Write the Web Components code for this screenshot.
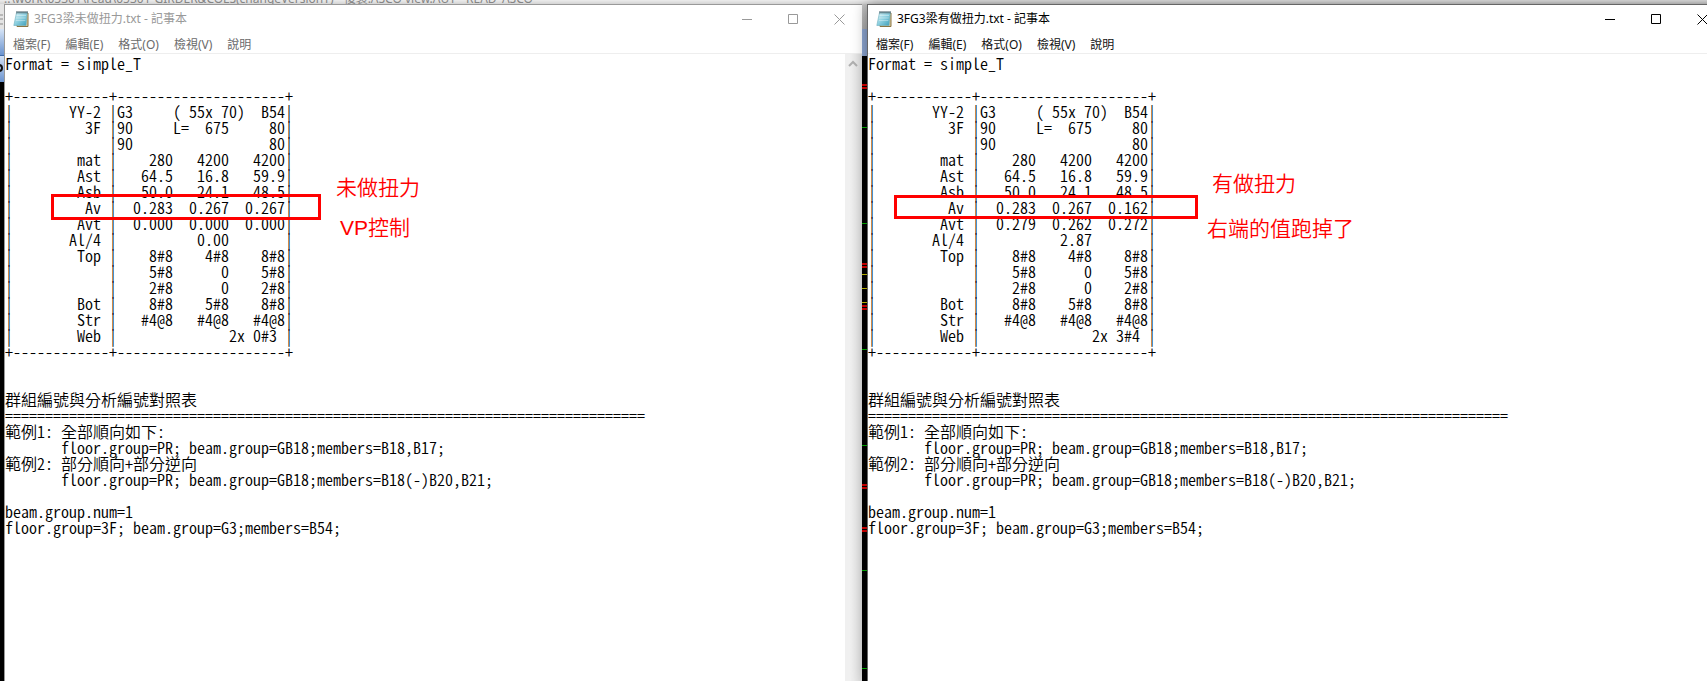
<!DOCTYPE html>
<html lang="zh-Hant">
<head>
<meta charset="utf-8">
<title>記事本</title>
<style>
html,body{margin:0;height:100%}
body{overflow:hidden;background:#000;font-family:"Noto Sans","Noto Sans CJK TC",sans-serif}
</style>
</head>
<body>
<compare-desktop>
  <backdrop-title slot="top">.:\work\05301\read\05301-GIRDER&amp;COLS(changeVersionT) - 複製.ASCO view.AUT - READ_ASCO</backdrop-title>
  <notepad-window slot="left" inactive heading="3FG3梁未做扭力.txt - 記事本">Format = simple_T

+------------+---------------------+
|       YY-2 |G3     ( 55x 70)  B54|
|         3F |90     L=  675     80|
|            |90                 80|
|        mat |    280   4200   4200|
|        Ast |   64.5   16.8   59.9|
|        Asb |   50.0   24.1   48.5|
|         Av |  0.283  0.267  0.267|
|        Avt |  0.000  0.000  0.000|
|       Al/4 |          0.00       |
|        Top |    8#8    4#8    8#8|
|            |    5#8      0    5#8|
|            |    2#8      0    2#8|
|        Bot |    8#8    5#8    8#8|
|        Str |   #4@8   #4@8   #4@8|
|        Web |              2x 0#3 |
+------------+---------------------+


群組編號與分析編號對照表
================================================================================
範例1: 全部順向如下:
       floor.group=PR; beam.group=GB18;members=B18,B17;
範例2: 部分順向+部分逆向
       floor.group=PR; beam.group=GB18;members=B18(-)B20,B21;

beam.group.num=1
floor.group=3F; beam.group=G3;members=B54;<mark-box slot="marks" style="--x:46px;--y:140px;--w:270px;--h:26px"></mark-box><mark-note slot="marks" style="--x:331px;--y:118px">未做扭力</mark-note><mark-note slot="marks" style="--x:335px;--y:158px">VP控制</mark-note></notepad-window>
  <notepad-window slot="right" heading="3FG3梁有做扭力.txt - 記事本">Format = simple_T

+------------+---------------------+
|       YY-2 |G3     ( 55x 70)  B54|
|         3F |90     L=  675     80|
|            |90                 80|
|        mat |    280   4200   4200|
|        Ast |   64.5   16.8   59.9|
|        Asb |   50.0   24.1   48.5|
|         Av |  0.283  0.267  0.162|
|        Avt |  0.279  0.262  0.272|
|       Al/4 |          2.87       |
|        Top |    8#8    4#8    8#8|
|            |    5#8      0    5#8|
|            |    2#8      0    2#8|
|        Bot |    8#8    5#8    8#8|
|        Str |   #4@8   #4@8   #4@8|
|        Web |              2x 3#4 |
+------------+---------------------+


群組編號與分析編號對照表
================================================================================
範例1: 全部順向如下:
       floor.group=PR; beam.group=GB18;members=B18,B17;
範例2: 部分順向+部分逆向
       floor.group=PR; beam.group=GB18;members=B18(-)B20,B21;

beam.group.num=1
floor.group=3F; beam.group=G3;members=B54;<mark-box slot="marks" style="--x:26px;--y:141px;--w:304px;--h:24px"></mark-box><mark-note slot="marks" style="--x:344px;--y:114px">有做扭力</mark-note><mark-note slot="marks" style="--x:339px;--y:159px">右端的值跑掉了</mark-note></notepad-window>
</compare-desktop>

<script>
class CompareDesktop extends HTMLElement{
  constructor(){
    super();
    this.attachShadow({mode:'open'}).innerHTML=`
<style>
:host{display:flex;flex-direction:column;height:100vh;overflow:hidden;background:#000}
.row{flex:1;min-height:0;display:grid;grid-template-columns:4px minmax(0,1fr) 5px minmax(0,1fr);margin-right:-18px}
svg{display:block;width:100%;height:100%}
::slotted(notepad-window){min-width:0}
::slotted([slot=right]){z-index:1}
</style>
<slot name="top"></slot>
<div class="row">
  <svg aria-hidden="true">
    <defs><linearGradient id="b" x2="0" y2="1"><stop stop-color="#d6e4f6"/><stop offset="1" stop-color="#6a93cf"/></linearGradient></defs>
    <rect width="5" height="25" fill="#e4e4e4"/>
    <path d="M0 11h3M0 15h3M0 20h3" stroke="#8a8a8a"/>
    <rect y="25" width="5" height="26" fill="url(#b)"/>
    <rect y="51" width="5" height="27" fill="url(#b)"/>
    <path d="M0 51.5h5" stroke="#3d69a8"/>
    <circle cx="-1" cy="64" r="3" fill="none" stroke="#111" stroke-width="2"/>
  </svg>
  <slot name="left"></slot>
  <svg aria-hidden="true">
    <defs><linearGradient id="g" x2="0" y2="1"><stop stop-color="#c9c9c9"/><stop offset="1" stop-color="#b0b0b0"/></linearGradient></defs>
    <rect width="5" height="25" fill="url(#g)"/>
    <rect y="25" width="5" height="27" fill="#8fa8d4"/>
    <path stroke="#e00000" stroke-width="2" d="M0 81h5M0 84h5M0 260h5M0 263h5M0 302h5M0 305h5M0 481h5M0 484h5M0 524h5M0 527h5"/>
    <path stroke="#d0c800" d="M0 270.500h5M0 284.500h5M0 298.500h5"/>
    <path stroke="#00b800" d="M0 123.500h5M0 219.500h5M0 345.500h5M0 441.500h5M0 566.500h5M0 664.500h5"/>
  </svg>
  <slot name="right"></slot>
</div>`;
  }
}
customElements.define('compare-desktop',CompareDesktop);

class BackdropTitle extends HTMLElement{
  constructor(){
    super();
    this.attachShadow({mode:'open'}).innerHTML=`
<style>
:host{display:flex;align-items:flex-end;height:4px;overflow:hidden;background:linear-gradient(#ececec,#d4d4d4);color:#858585;font:12px/16px "Noto Sans","Noto Sans CJK TC",sans-serif;white-space:nowrap}
span{margin:0 0 -3px 4px}
</style><span><slot></slot></span>`;
  }
}
customElements.define('backdrop-title',BackdropTitle);

class NotepadWindow extends HTMLElement{
  constructor(){
    super();
    this.attachShadow({mode:'open'}).innerHTML=`
<style>
:host{display:flex;flex-direction:column;box-sizing:border-box;border:solid #666;border-width:1px 0 0 1px;background:#fff;color:#000;box-shadow:0 0 14px rgba(0,0,0,.4);position:relative;--ui:#000;--menu:#111}
:host([inactive]){border-color:#999;box-shadow:none;--ui:#999;--menu:#6b6b6b}
header{display:flex;align-items:center;height:28px;padding-left:8px;color:var(--ui)}
h1{flex:1;margin:0 0 0 5px;font-size:12px;line-height:16px;font-weight:400;white-space:nowrap}
header svg{display:block}
.ctl{width:46px;height:28px;padding:0;border:0;background:none;color:inherit;display:grid;place-items:center}
nav{display:flex;box-sizing:border-box;height:21px;padding:3px 0 0 1px;border-bottom:1px solid #eee}
nav button{border:0;background:none;padding:0 8px 0 7px;font:12px/16px "Noto Sans","Noto Sans CJK TC",sans-serif;color:var(--menu);white-space:nowrap}
.body{flex:1;min-height:0;display:flex;position:relative}
textarea{flex:1;min-width:0;box-sizing:border-box;margin:0;padding:1px 0 0;border:0;outline:0;resize:none;overflow:hidden;background:none;color:#000;white-space:pre;font:350 16px/16px "Noto Sans CJK TC",monospace;font-feature-settings:"hwid","liga" 0;font-variant-ligatures:none;font-kerning:none}
.bar{width:17px;background:linear-gradient(90deg,#f0f0f0 30%,#dedede)}
.bar svg{display:block;margin:6px auto 0 3px}
</style>
<header>
  <svg width="16" height="18" viewBox="0 0 16 18" aria-hidden="true">
    <defs><linearGradient id="p" x2="1" y2="1"><stop stop-color="#d9f3f8"/><stop offset=".5" stop-color="#8ccfdf"/><stop offset="1" stop-color="#3a9db8"/></linearGradient></defs>
    <path d="M4 3h11v13.500H4z" fill="#d8c9a0" stroke="#8a7442"/>
    <path d="M3.500 2.500h10.800L13 15.500H.8z" fill="url(#p)" stroke="#6fb0c0" stroke-width=".6"/>
    <path d="M3.500 5.500h9.500M3.200 8h9.500M2.800 10.500h9.500" stroke="#fff" stroke-opacity=".5" stroke-width=".7"/>
    <path d="M4 1v2.500M6 1v2.500M8 1v2.500M10 1v2.500M12 1v2.500M14 1v2.500" stroke="#3c5560"/>
  </svg>
  <h1></h1>
  <button class="ctl" aria-label="最小化"><svg width="11" height="11"><path d="M0 5.500h10" stroke="currentColor"/></svg></button>
  <button class="ctl" aria-label="最大化"><svg width="11" height="11"><path d="M.5.500h9v9h-9z" fill="none" stroke="currentColor"/></svg></button>
  <button class="ctl" aria-label="關閉"><svg width="11" height="11"><path d="M.5.500l10 10M10.500.500l-10 10" stroke="currentColor"/></svg></button>
</header>
<nav><button>檔案(F)</button><button>編輯(E)</button><button>格式(O)</button><button>檢視(V)</button><button>說明</button></nav>
<div class="body">
  <textarea spellcheck="false" wrap="off"></textarea>
  <div class="bar"><svg width="10" height="8"><path d="M1 6l4-4 4 4" fill="none" stroke="#b0b0b0" stroke-width="2"/></svg></div>
  <slot name="marks"></slot>
</div>`;
  }
  connectedCallback(){
    const title=this.getAttribute('heading'),root=this.shadowRoot;
    root.querySelector('h1').textContent=title;
    const area=root.querySelector('textarea');
    area.setAttribute('aria-label',title);
    area.textContent=[...this.childNodes].filter(n=>n.nodeType===3).map(n=>n.data).join('');
  }
}
customElements.define('notepad-window',NotepadWindow);

class MarkBox extends HTMLElement{
  constructor(){
    super();
    this.attachShadow({mode:'open'}).innerHTML=`<style>:host{position:absolute;left:var(--x);top:var(--y);width:var(--w);height:var(--h);box-sizing:border-box;border:3px solid #f00;pointer-events:none}</style>`;
  }
}
customElements.define('mark-box',MarkBox);

class MarkNote extends HTMLElement{
  constructor(){
    super();
    this.attachShadow({mode:'open'}).innerHTML=`<style>:host{position:absolute;left:var(--x);top:var(--y);color:#f00;font:350 21px/32px "Liberation Sans","Noto Sans CJK TC",sans-serif;white-space:nowrap}</style><slot></slot>`;
  }
}
customElements.define('mark-note',MarkNote);
</script>
</body>
</html>
